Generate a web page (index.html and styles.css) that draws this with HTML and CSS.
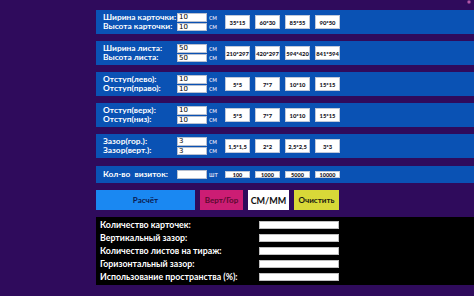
FILE: index.html
```html
<!DOCTYPE html>
<html lang="ru">
<head>
    <meta charset="UTF-8">
    <title>Калькулятор визиток</title>
    <link rel="stylesheet" href="styles.css">
</head>
<body>
    <span class="corner-dot"></span>
    <div class="calc">
        <div class="band">
            <div class="fields">
                <div class="field"><label>Ширина карточки:</label><input value="10"><span class="unit">см</span></div>
                <div class="field"><label>Высота карточки:</label><input value="10"><span class="unit">см</span></div>
            </div>
            <div class="presets">
                <button class="preset">35*15</button>
                <button class="preset">60*30</button>
                <button class="preset">85*55</button>
                <button class="preset">90*50</button>
            </div>
        </div>

        <div class="band">
            <div class="fields">
                <div class="field"><label>Ширина листа:</label><input value="50"><span class="unit">см</span></div>
                <div class="field"><label>Высота листа:</label><input value="50"><span class="unit">см</span></div>
            </div>
            <div class="presets">
                <button class="preset">210*297</button>
                <button class="preset">420*297</button>
                <button class="preset">594*420</button>
                <button class="preset">841*594</button>
            </div>
        </div>

        <div class="band">
            <div class="fields">
                <div class="field"><label>Отступ(лево):</label><input value="10"><span class="unit">см</span></div>
                <div class="field"><label>Отступ(право):</label><input value="10"><span class="unit">см</span></div>
            </div>
            <div class="presets">
                <button class="preset">5*5</button>
                <button class="preset">7*7</button>
                <button class="preset">10*10</button>
                <button class="preset">15*15</button>
            </div>
        </div>

        <div class="band">
            <div class="fields">
                <div class="field"><label>Отступ(верх):</label><input value="10"><span class="unit">см</span></div>
                <div class="field"><label>Отступ(низ):</label><input value="10"><span class="unit">см</span></div>
            </div>
            <div class="presets">
                <button class="preset">5*5</button>
                <button class="preset">7*7</button>
                <button class="preset">10*10</button>
                <button class="preset">15*15</button>
            </div>
        </div>

        <div class="band">
            <div class="fields">
                <div class="field"><label>Зазор(гор.):</label><input value="3"><span class="unit">см</span></div>
                <div class="field"><label>Зазор(верт.):</label><input value="3"><span class="unit">см</span></div>
            </div>
            <div class="presets">
                <button class="preset">1,5*1,5</button>
                <button class="preset">2*2</button>
                <button class="preset">2,5*2,5</button>
                <button class="preset">3*3</button>
            </div>
        </div>

        <div class="band band-count">
            <div class="field"><label>Кол-во&nbsp; визиток:</label><input value=""><span class="unit">шт</span></div>
            <div class="presets">
                <button class="preset small">100</button>
                <button class="preset small">1000</button>
                <button class="preset small">5000</button>
                <button class="preset small">10000</button>
            </div>
        </div>

        <div class="actions">
            <button class="btn btn-calc">Расчёт</button>
            <button class="btn btn-rotate">Верт/Гор</button>
            <button class="btn btn-units">СМ/ММ</button>
            <button class="btn btn-clear">Очистить</button>
        </div>

        <div class="results">
            <div class="result"><span>Количество карточек:</span><output></output></div>
            <div class="result"><span>Вертикальный зазор:</span><output></output></div>
            <div class="result"><span>Количество листов на тираж:</span><output></output></div>
            <div class="result"><span>Горизонтальный зазор:</span><output></output></div>
            <div class="result"><span>Использование пространства (%):</span><output></output></div>
        </div>
    </div>
</body>
</html>
```

FILE: styles.css
```css
body {
    margin: 0;
    background-color: #2f0b5c; /* deep purple */
    font-family: "Lato", "Noto Sans", sans-serif;
    font-weight: bold;
    color: #ffffff;
}
.corner-dot {
    position: absolute;
    top: 0;
    right: 3px;
    width: 4px;
    height: 4px;
    border-radius: 50%;
    background: radial-gradient(#e070c0, rgba(120, 40, 140, 0));
}
.calc {
    margin-left: 96px;
    padding-top: 10px;
    display: flex;
    flex-direction: column;
}
.band {
    background-color: #0a52b4;
    height: 24px;
    margin-bottom: 7px;
    display: flex;
    align-items: center;
    padding-left: 7px;
}
.fields {
    display: flex;
    flex-direction: column;
}
.field {
    display: flex;
    align-items: center;
    height: 9.5px;
}
.field label {
    width: 74px;
    font-size: 8.4px;
    line-height: 9px;
    white-space: nowrap;
}
.field input {
    width: 30px;
    height: 8.5px;
    box-sizing: border-box;
    border: 1px solid #b8c0d0;
    padding: 0 0 0 1px;
    margin: 0;
    font-family: "DejaVu Sans", sans-serif;
    font-size: 7px;
    color: #000;
    background: #fff;
}
.unit {
    margin-left: 2px;
    width: 14px;
    font-size: 6.5px;
    color: #c8d2ee;
}
.presets {
    display: flex;
    gap: 5px;
    margin-left: 2px;
}
.preset {
    width: 25px;
    height: 14px;
    padding: 0;
    border: 1px solid #c0c8d8;
    background: #ffffff;
    color: #111122;
    font-family: "Lato", sans-serif;
    font-weight: 900;
    font-size: 5.8px;
    white-space: nowrap;
    display: flex;
    align-items: center;
    justify-content: center;
    overflow: visible;
}
.band-count {
    height: 17px;
    margin-top: 1px;
}
.preset.small {
    height: 7px;
    font-size: 5.5px;
}
.actions {
    display: flex;
    gap: 5px;
    height: 20px;
}
.btn {
    border: none;
    padding: 0;
    font-family: "Lato", sans-serif;
    font-weight: bold;
    font-size: 8px;
    color: #1a1a3a;
}
.btn-calc {
    width: 99px;
    background-color: #1a88f2;
    color: #0a1a50;
}
.btn-rotate {
    width: 43px;
    background-color: #cc1d74;
    color: #5a0a30;
}
.btn-units {
    width: 41px;
    background-color: #ffffff;
    color: #111111;
    font-size: 9px;
}
.btn-clear {
    width: 45px;
    background-color: #d8d838;
    color: #1a1a10;
}
.results {
    margin-top: 7px;
    height: 68px;
    background-color: #000000;
    padding: 1px 0 0 4px;
    box-sizing: border-box;
}
.result {
    display: flex;
    align-items: center;
    height: 13px;
}
.result span {
    width: 159px;
    font-size: 8.8px;
    white-space: nowrap;
}
.result output {
    display: block;
    width: 80px;
    height: 8px;
    background: #ffffff;
    border: 1px solid #c0c0c0;
    box-sizing: border-box;
}
```
